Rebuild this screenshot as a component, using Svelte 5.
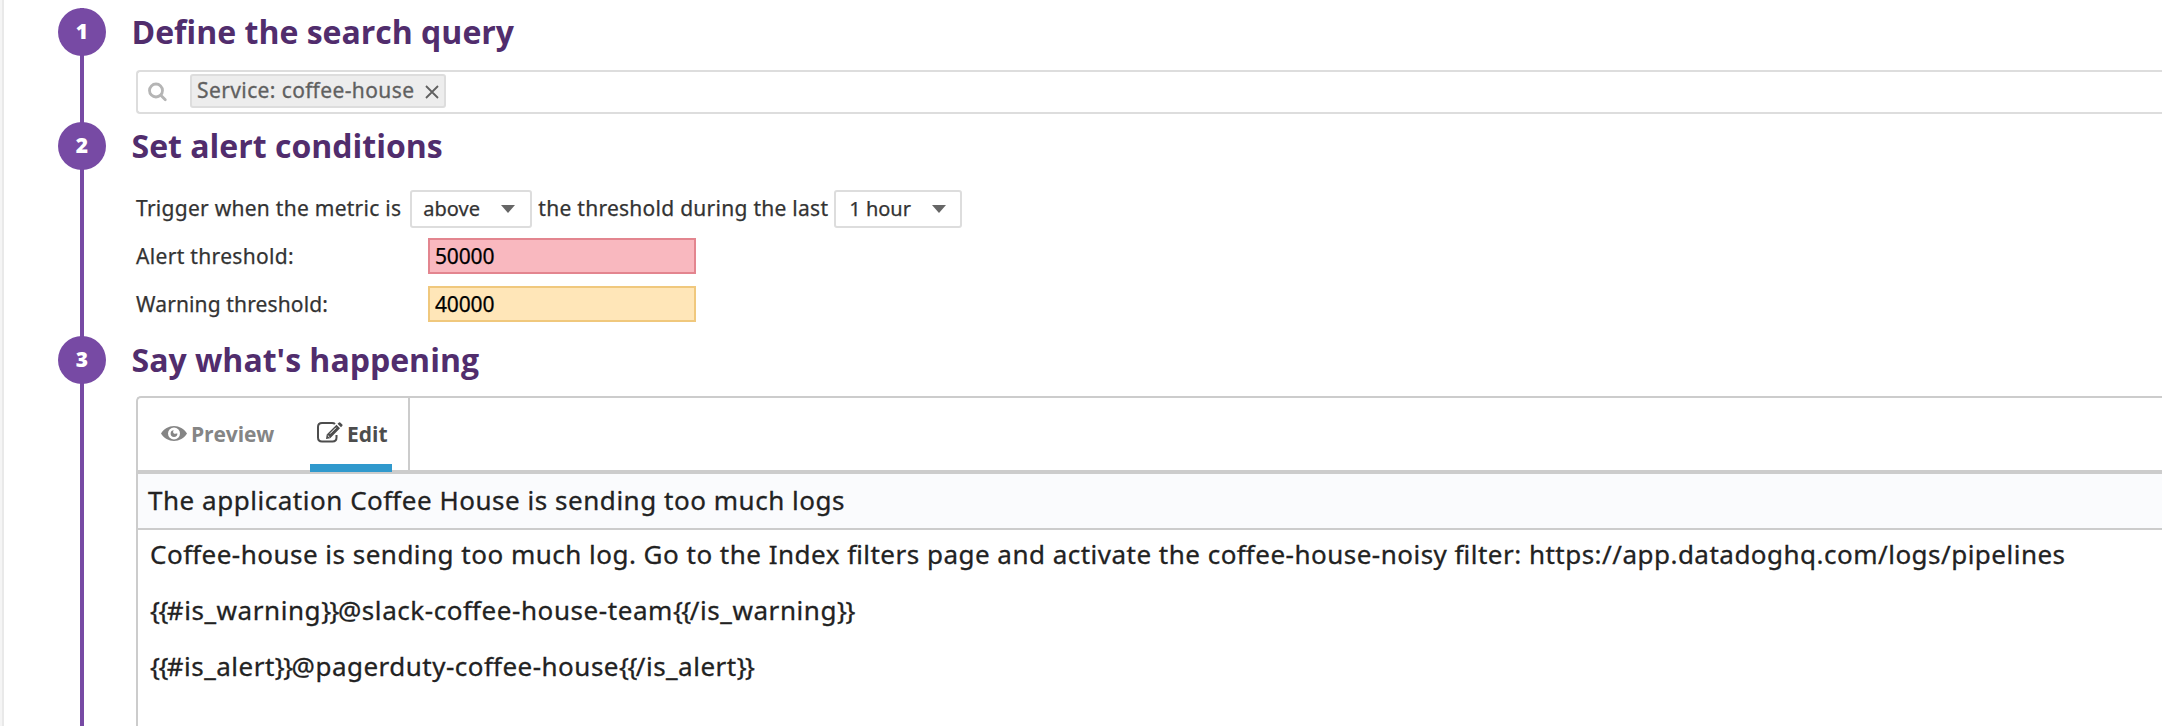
<script>
  const message = [
    'Coffee-house is sending too much log. Go to the Index filters page and activate the coffee-house-noisy filter: https://app.datadoghq.com/logs/pipelines',
    '{{#is_warning}}@slack-coffee-house-team{{/is_warning}}',
    '{{#is_alert}}@pagerduty-coffee-house{{/is_alert}}'
  ];
  // Template braces are set tighter than the words around them.
  const parts = (line) => line.split(/(\{\{|\}\})/).filter(Boolean);
  const isBrace = (part) => part === '{{' || part === '}}';
</script>

<div class="page">
  <section class="step first">
    <div class="rail"><span class="num">1</span></div>
    <div class="body">
      <h2>Define the search query</h2>
      <div class="search">
        <svg class="lens" viewBox="0 0 20 20"><circle cx="8" cy="8.500" r="6.500" /><path d="M12.800 13.300L17.300 17.800" /></svg>
        <div class="chip">
          <span>Service: coffee-house</span>
          <svg class="x" viewBox="0 0 14 14"><path d="M1 1L13 13M13 1L1 13" /></svg>
        </div>
      </div>
    </div>
  </section>

  <section class="step second">
    <div class="rail"><span class="num">2</span></div>
    <div class="body">
      <h2>Set alert conditions</h2>
      <div class="trigger">
        <span class="phrase">Trigger when the metric is</span>
        <div class="select above"><span>above</span><i></i></div>
        <span class="phrase">the threshold during the last</span>
        <div class="select hour"><span>1 hour</span><i></i></div>
      </div>
      <div class="field">
        <span class="label alert">Alert threshold:</span>
        <div class="input red">50000</div>
      </div>
      <div class="field">
        <span class="label">Warning threshold:</span>
        <div class="input yellow">40000</div>
      </div>
    </div>
  </section>

  <section class="step third">
    <div class="rail"><span class="num">3</span></div>
    <div class="body">
      <h2>Say what's happening</h2>
      <div class="editor">
        <div class="tabs">
          <div class="tab preview">
            <svg class="eye" viewBox="0 0 26 15"><path fill-rule="evenodd" d="M0 7.500C3 2.800 7.700 0 13 0S23 2.800 26 7.500C23 12.200 18.300 15 13 15S3 12.200 0 7.500ZM13 1.500a6 6 0 1 0 0 12a6 6 0 1 0 0-12Z" /><path fill-rule="evenodd" d="M13 4.200a3.400 3.400 0 1 0 3.400 3.400h-1.400a2 2 0 0 1-2.900-1.400a2 2 0 0 1 .9-2Z" /></svg>
            <span>Preview</span>
          </div>
          <div class="tab edit">
            <svg class="pen" viewBox="0 0 26 21"><path class="box" d="M18 2Q17 1 15 1H5Q1 1 1 5V15.500Q1 19.500 5 19.500H15.500Q19.500 19.500 19.500 15.500V13" /><path d="M19.500 2.800L23 6.300L13.200 16.200L9 17L9.700 12.600ZM20.500 1.800L22 .4Q22.600 0 23.200.5L25.300 2.600Q25.900 3.200 25.400 3.800L24 5.300Z" /><path class="hole" d="M13 11.700L19 5.700M10.800 13.500L12.500 15.200" /></svg>
            <span>Edit</span>
          </div>
        </div>
        <div class="title">The application Coffee House is sending too much logs</div>
        <div class="message">
          {#each message as line}
            <p>{#each parts(line) as part}<span class:brace={isBrace(part)}>{part}</span>{/each}</p>
          {/each}
        </div>
      </div>
    </div>
  </section>
</div>

<style>
  :global(body) { background: #fff; overflow: hidden; }
  .page { box-sizing: border-box; height: 726px; padding-top: 8px; border-left: 2px solid #f5f5f5; box-shadow: inset 2px 0 #e9e9e9; overflow: hidden; font-family: "Noto Sans", sans-serif; font-size: 21px; color: #333; white-space: nowrap; display: flex; flex-direction: column; }

  .step { display: flex; flex: none; padding-left: 56px; gap: 26px; }
  .first { height: 114px; }
  .second { height: 214px; }
  .third { height: 390px; }
  .rail { width: 48px; flex: none; background: linear-gradient(#774aa4, #774aa4) center / 4px 100% no-repeat; }
  .num { display: block; height: 48px; line-height: 47px; border-radius: 50%; background: #774aa4; color: #fff; text-align: center; font-family: "Open Sans", sans-serif; font-weight: 800; font-size: 21px; }
  .body { flex: 1; min-width: 0; }
  h2 { margin: 0; height: 62px; line-height: 47px; font-family: "Open Sans", sans-serif; font-size: 32px; font-weight: 700; color: #512d6d; text-indent: -0.5px; }

  .search { box-sizing: border-box; height: 44px; margin-left: 4px; border: 2px solid #ddd; border-right: 0; border-radius: 4px 0 0 4px; display: flex; padding: 2px 0 0 10px; }
  .lens { width: 20px; height: 20px; margin: 8px 22px 0 0; fill: none; stroke: #b5b5b5; stroke-width: 2.8; stroke-linecap: round; }
  .chip { box-sizing: border-box; height: 34px; width: 256px; border: 2px solid #ddd; border-radius: 3px; background: #ededed; color: #606060; display: flex; justify-content: space-between; line-height: 28px; padding: 0 5px; letter-spacing: 0.4px; font-feature-settings: "liga" 1; -webkit-text-stroke: 0.3px; }
  .x { width: 14px; height: 14px; margin-top: 9px; stroke: #606060; stroke-width: 1.8; }

  .trigger { display: flex; margin: 6px 0 0 4px; height: 38px; line-height: 36px; -webkit-text-stroke: 0.25px; }
  .phrase { letter-spacing: 0.27px; }
  .select { box-sizing: border-box; border: 2px solid #ddd; border-radius: 3px; height: 38px; display: flex; justify-content: space-between; align-items: center; padding: 0 15px 0 11px; font-size: 20px; line-height: 34px; }
  .select i { border: 7px solid transparent; border-top: 8px solid #666; border-bottom: 0; }
  .above { width: 122px; margin: 0 6px 0 9px; }
  .hour { width: 128px; margin-left: 6px; padding: 0 14px 0 13px; }

  .field { display: flex; margin: 10px 0 0 4px; height: 36px; line-height: 36px; -webkit-text-stroke: 0.25px; }
  .field + .field { margin-top: 12px; }
  .label { width: 292px; letter-spacing: 0.13px; }
  .alert { letter-spacing: 0.33px; }
  .input { box-sizing: border-box; width: 268px; border: 2px solid #e3858f; background: #f9b8bf; padding-left: 5px; line-height: 32px; color: #000; letter-spacing: -0.15px; }
  .yellow { border-color: #f0c87d; background: #ffe6b8; }

  .third h2 { height: 60px; }
  .editor { box-sizing: border-box; height: 350px; margin-left: 4px; border: 2px solid #ccc; border-right: 0; border-bottom: 0; border-radius: 5px 0 0; }
  .tabs { display: flex; height: 72px; border-bottom: 4px solid #ccc; font-family: "Open Sans", sans-serif; font-weight: 700; line-height: 72px; }
  .tab { display: flex; gap: 5px; }
  .preview { padding-left: 23px; color: #858585; width: 149px; gap: 4px; letter-spacing: -0.1px; }
  .eye { width: 26px; height: 15px; margin-top: 28px; fill: #858585; }
  .edit { box-sizing: border-box; width: 100px; height: 74px; border-right: 2px solid #ccc; color: #4d4d4d; padding-left: 7px; gap: 4px; background: linear-gradient(#3099cd, #3099cd) 0 100% / 82px 8px no-repeat; }
  .pen { width: 26px; height: 21px; margin-top: 24px; fill: #4d4d4d; }
  .box { fill: none; stroke: #4d4d4d; stroke-width: 2; }
  .hole { fill: none; stroke: #fff; stroke-width: 1; }

  .title { height: 54px; border-bottom: 2px solid #ccc; background: #fafbfd; padding-left: 10px; line-height: 52px; font-size: 26px; color: #222; letter-spacing: 0.53px; font-feature-settings: "liga" 1; -webkit-text-stroke: 0.3px; }
  .message { padding-left: 12px; font-size: 26px; color: #222; font-feature-settings: "liga" 1; -webkit-text-stroke: 0.3px; }
  p { margin: 0; height: 56px; line-height: 48px; letter-spacing: 0.488px; }
  p:nth-child(2) { letter-spacing: 0.57px; }
  p:nth-child(3) { letter-spacing: 0.49px; }
  .brace { letter-spacing: -1.5px; }
</style>
